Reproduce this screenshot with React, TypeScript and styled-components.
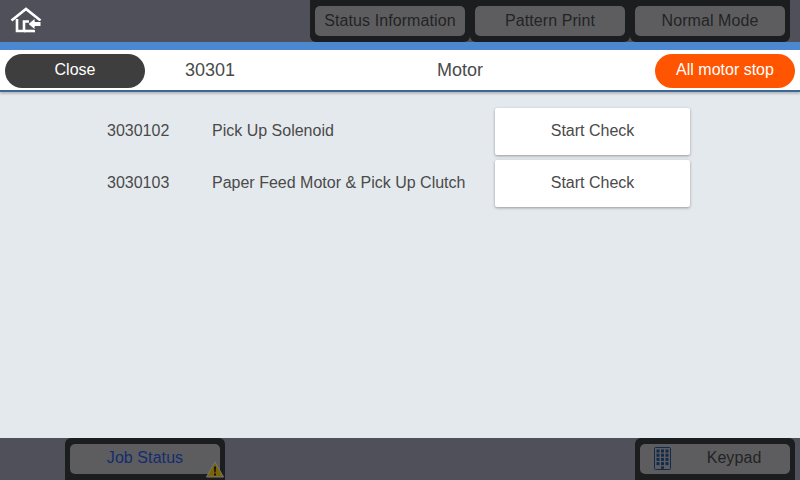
import React from "react";
import styled, { createGlobalStyle } from "styled-components";

const Global = createGlobalStyle`
  html, body { margin: 0; padding: 0; width: 800px; height: 480px; overflow: hidden; }
  * { box-sizing: border-box; }
  body { font-family: "Liberation Sans", Arial, sans-serif; }
`;

const Screen = styled.div`
  width: 800px;
  height: 480px;
  display: flex;
  flex-direction: column;
  background: #e4e9ed;
`;

const TopBar = styled.div`
  height: 42px;
  flex: none;
  background: #50505a;
  display: flex;
  justify-content: space-between;
  padding-right: 10px;
`;

const HomeButton = styled.div`
  width: 44px;
  height: 42px;
  padding: 7px 0 0 10px;
`;

const TopTabs = styled.div`
  display: flex;
`;

const DimTab = styled.div<{ $round?: string }>`
  width: 160px;
  height: 42px;
  background: #1c1d1f;
  border-radius: ${(p) => p.$round ?? "0 0 6px 6px"};
  padding: 6px 5px;
  display: flex;
`;

const DimFace = styled.div<{ $blue?: boolean; $lift?: number }>`
  flex: 1;
  background: #5d5d5f;
  border-radius: 5px;
  display: flex;
  align-items: center;
  justify-content: center;
  position: relative;
  font-size: 16px;
  letter-spacing: 0.08px;
  padding-bottom: ${(p) => p.$lift ?? 0}px;
  color: ${(p) => (p.$blue ? "#142c6e" : "#232325")};
`;

const BlueStripe = styled.div`
  height: 8px;
  flex: none;
  background: #4c88d0;
`;

const Header = styled.div`
  height: 42px;
  flex: none;
  background: #fff;
  border-bottom: 2px solid #3c6796;
  box-shadow: 0 2px 2px rgba(0, 0, 0, 0.2);
  display: grid;
  grid-template-columns: 140px 120px 390px 140px;
  align-items: center;
  padding: 4px 5px 0;
  font-size: 18px;
  color: #4a4a4a;
`;

const Pill = styled.div<{ $bg: string }>`
  height: 34px;
  align-self: start;
  border-radius: 17px;
  background: ${(p) => p.$bg};
  color: #fff;
  font-size: 16px;
  padding-bottom: 3px;
  display: flex;
  align-items: center;
  justify-content: center;
`;

const HeaderCode = styled.div`
  padding: 0 0 4px 40px;
`;

const HeaderTitle = styled.div`
  padding-bottom: 4px;
  text-align: center;
`;

const Content = styled.div`
  flex: 1;
  padding: 16px 0 0 107px;
  display: flex;
  flex-direction: column;
  gap: 5px;
`;

const Row = styled.div`
  display: grid;
  grid-template-columns: 105px 283px 195px;
  height: 47px;
  align-items: center;
  font-size: 16px;
  color: #4a4a4a;
`;

const RowText = styled.span`
  padding-bottom: 1px;
`;

const CheckButton = styled.div`
  height: 47px;
  background: #fff;
  border-radius: 2px;
  box-shadow: 0 1px 3px rgba(0, 0, 0, 0.35);
  padding-bottom: 1px;
  display: flex;
  align-items: center;
  justify-content: center;
`;

const BottomBar = styled.div`
  height: 42px;
  flex: none;
  background: #50505a;
  display: flex;
  justify-content: space-between;
  padding: 0 5px 0 65px;
`;

const KeyIcon = styled.svg`
  position: absolute;
  left: 14px;
  top: 3px;
`;

const KeyLabel = styled.span`
  margin-left: 38px;
`;

const Warn = styled.svg`
  position: absolute;
  right: -4px;
  bottom: -4px;
`;

function Home() {
  return (
    <svg width="32" height="26" viewBox="0 0 32 26" fill="none">
      <path d="M1.5 13.5 L16 2 L30.5 13.5" stroke="#fff" strokeWidth="2.6" />
      <path d="M7 12 V24 H14 V14.5 H19" stroke="#fff" strokeWidth="2.6" />
      <path d="M14 24 H25" stroke="#fff" strokeWidth="2.6" />
      <path d="M18 17 L25 11 V14.5 H31 V19.5 H25 V23 Z" fill="#fff" stroke="#50505a" strokeWidth="1" />
    </svg>
  );
}

function Keypad() {
  const dots = [];
  for (let r = 0; r < 4; r++)
    for (let c = 0; c < 3; c++)
      dots.push(<rect key={`${r}-${c}`} x={2.5 + c * 4.5} y={2.5 + r * 4.2} width="3" height="3" fill="#122a4c" />);
  return (
    <KeyIcon width="17" height="23" viewBox="0 0 17 23">
      <rect x="0.5" y="0.5" width="16" height="22" rx="1" fill="none" stroke="#122a4c" />
      {dots}
      <rect x="7" y="19.4" width="3" height="2.4" fill="#122a4c" />
    </KeyIcon>
  );
}

export default function App() {
  return (
    <Screen>
      <Global />
      <TopBar>
        <HomeButton><Home /></HomeButton>
        <TopTabs>
          <DimTab><DimFace>Status Information</DimFace></DimTab>
          <DimTab><DimFace>Pattern Print</DimFace></DimTab>
          <DimTab><DimFace>Normal Mode</DimFace></DimTab>
        </TopTabs>
      </TopBar>
      <BlueStripe />
      <Header>
        <Pill $bg="#3e3e3e">Close</Pill>
        <HeaderCode>30301</HeaderCode>
        <HeaderTitle>Motor</HeaderTitle>
        <Pill $bg="#ff5500">All motor stop</Pill>
      </Header>
      <Content>
        <Row>
          <RowText>3030102</RowText>
          <RowText>Pick Up Solenoid</RowText>
          <CheckButton>Start Check</CheckButton>
        </Row>
        <Row>
          <RowText>3030103</RowText>
          <RowText>Paper Feed Motor &amp; Pick Up Clutch</RowText>
          <CheckButton>Start Check</CheckButton>
        </Row>
      </Content>
      <BottomBar>
        <DimTab $round="6px 6px 0 0">
          <DimFace $blue $lift={2}>
            Job Status
            <Warn width="18" height="17" viewBox="0 0 18 17">
              <path d="M9 1 L17.5 16 H0.5 Z" fill="#7a6406" stroke="#77777a" strokeWidth="1" />
              <path d="M8 5.5 H10 L9.6 11.5 H8.4 Z M8 12.5 H10 V14.5 H8 Z" fill="#111" />
            </Warn>
          </DimFace>
        </DimTab>
        <DimTab $round="6px 6px 0 0">
          <DimFace $lift={2}>
            <Keypad />
            <KeyLabel>Keypad</KeyLabel>
          </DimFace>
        </DimTab>
      </BottomBar>
    </Screen>
  );
}
